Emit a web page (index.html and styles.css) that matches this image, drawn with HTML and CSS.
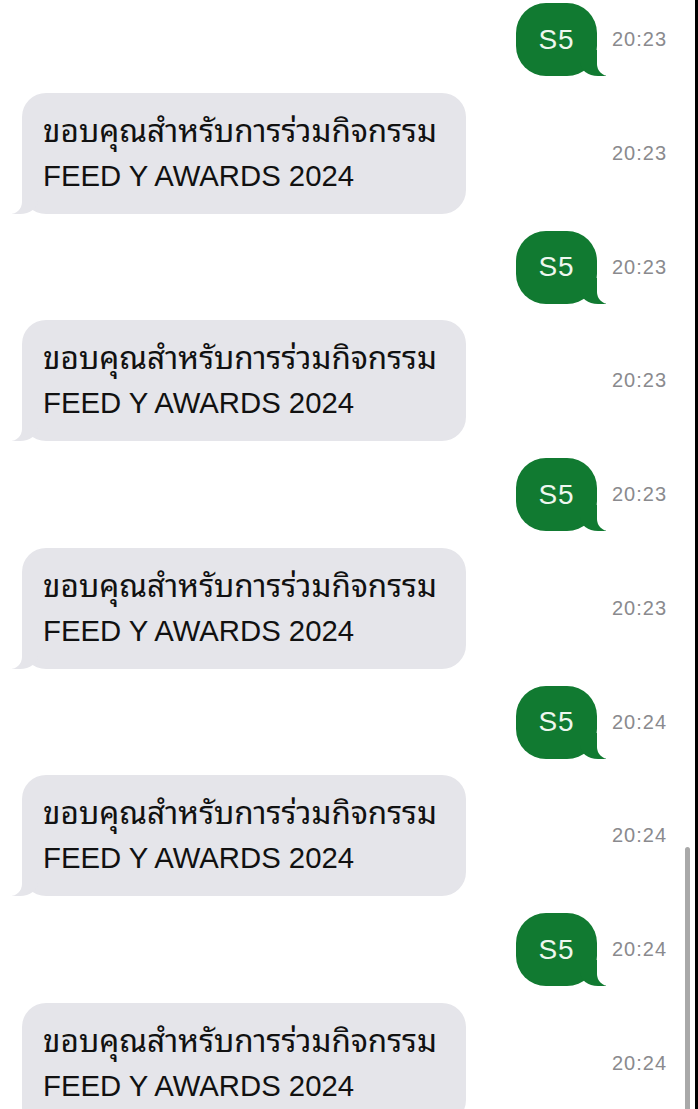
FILE: index.html
```html
<!DOCTYPE html>
<html lang="th">
<head>
    <meta charset="UTF-8">
    <title>Messages</title>
    <link rel="stylesheet" href="styles.css">
</head>
<body>
    <div class="screen">
        <div class="chat">
            <div class="row">
                <div class="bubbles out"><div class="bubble green">S5</div></div>
                <div class="time">20:23</div>
            </div>
            <div class="row">
                <div class="bubbles"><div class="bubble grey"><span class="th">ขอบคุณสำหรับการร่วมกิจกรรม</span><br>FEED Y AWARDS 2024</div></div>
                <div class="time">20:23</div>
            </div>
            <div class="row">
                <div class="bubbles out"><div class="bubble green">S5</div></div>
                <div class="time">20:23</div>
            </div>
            <div class="row">
                <div class="bubbles"><div class="bubble grey"><span class="th">ขอบคุณสำหรับการร่วมกิจกรรม</span><br>FEED Y AWARDS 2024</div></div>
                <div class="time">20:23</div>
            </div>
            <div class="row">
                <div class="bubbles out"><div class="bubble green">S5</div></div>
                <div class="time">20:23</div>
            </div>
            <div class="row">
                <div class="bubbles"><div class="bubble grey"><span class="th">ขอบคุณสำหรับการร่วมกิจกรรม</span><br>FEED Y AWARDS 2024</div></div>
                <div class="time">20:23</div>
            </div>
            <div class="row">
                <div class="bubbles out"><div class="bubble green">S5</div></div>
                <div class="time">20:24</div>
            </div>
            <div class="row">
                <div class="bubbles"><div class="bubble grey"><span class="th">ขอบคุณสำหรับการร่วมกิจกรรม</span><br>FEED Y AWARDS 2024</div></div>
                <div class="time">20:24</div>
            </div>
            <div class="row">
                <div class="bubbles out"><div class="bubble green">S5</div></div>
                <div class="time">20:24</div>
            </div>
            <div class="row">
                <div class="bubbles"><div class="bubble grey"><span class="th">ขอบคุณสำหรับการร่วมกิจกรรม</span><br>FEED Y AWARDS 2024</div></div>
                <div class="time">20:24</div>
            </div>
        </div>
        <div class="scrollbar"></div>
    </div>
</body>
</html>
```

FILE: styles.css
```css
html {
    background-color: #000;
}

body {
    margin: 0;
    font-family: "Liberation Sans", "Noto Sans Thai Looped", "Noto Sans Thai", "Noto Sans", sans-serif;
    background-color: #000;
    overflow: hidden;
}

.screen {
    position: relative;
    width: 695px;
    height: 1109px;
    background-color: #fff;
    overflow: hidden;
}

.chat {
    display: flex;
    flex-direction: column;
    gap: 16.75px;
    padding-top: 3px;
}

.row {
    display: flex;
    align-items: center;
    gap: 15px;
    padding-left: 22px;
}

.bubbles {
    flex: 1;
    display: flex;
}

.bubbles.out {
    justify-content: flex-end;
}

.bubble {
    position: relative;
    box-sizing: border-box;
}

.bubble.green {
    width: 81px;
    height: 73px;
    border-radius: 30px;
    background-color: #117a31;
    color: #eef7ef;
    font-size: 28px;
    letter-spacing: 1px;
    display: flex;
    align-items: center;
    justify-content: center;
}

.bubble.grey {
    width: 444px;
    height: 121px;
    border-radius: 24px;
    background-color: #e5e5ea;
    color: #111;
    font-size: 29.3px;
    line-height: 44px;
    padding: 16px 0 0 21px;
    white-space: nowrap;
}

.bubble.grey .th {
    font-size: 31.5px;
}

/* bubble tails */
.bubble::before, .bubble::after {
    content: "";
    position: absolute;
    bottom: 0;
    height: 26px;
}

.bubble.grey::before {
    left: -10px;
    width: 26px;
    background-color: #e5e5ea;
    border-bottom-right-radius: 18px 14px;
}

.bubble.grey::after {
    left: -30px;
    width: 30px;
    background-color: #fff;
    border-bottom-right-radius: 12px;
}

.bubble.green::before {
    right: -9px;
    width: 26px;
    background-color: #117a31;
    border-bottom-left-radius: 18px 14px;
}

.bubble.green::after {
    right: -30px;
    width: 30px;
    background-color: #fff;
    border-bottom-left-radius: 12px;
}

.time {
    width: 83px;
    font-size: 20px;
    letter-spacing: 1px;
    color: #8a8a8e;
}

.scrollbar {
    position: absolute;
    left: 685px;
    top: 847px;
    width: 5px;
    height: 280px;
    border-radius: 3px;
    background-color: #a9a9a9;
}
```
